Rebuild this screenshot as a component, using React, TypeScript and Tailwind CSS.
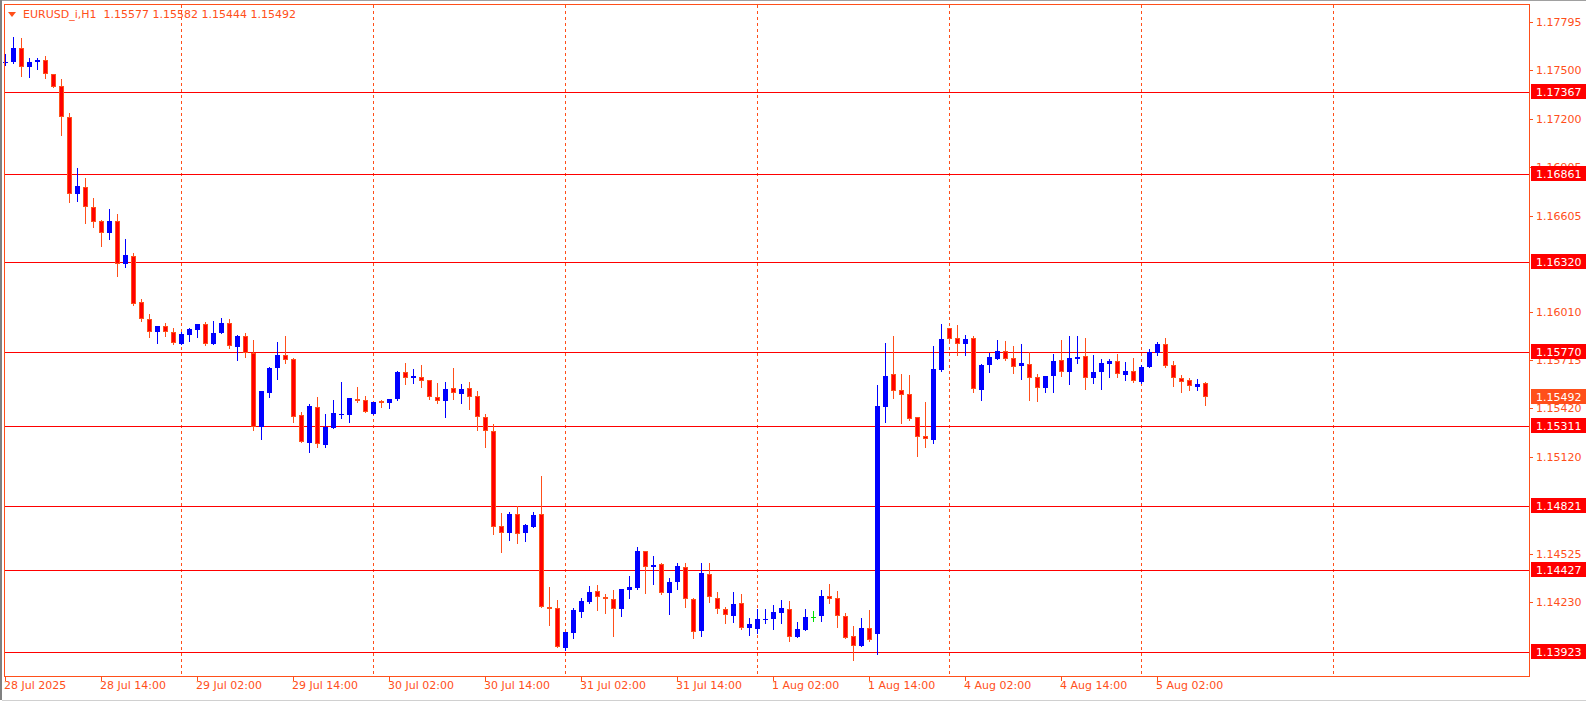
import React from "react";

const C: [number, number, number, number][] = [
[63,54,65,62],[62,37,63,48],[48,38,76,67],[67,58,77,62],[62,58,69,60],[60,56,78,74],[74,74,87,87],[86,79,135,117],
[117,113,202,194],[194,168,201,186],[187,178,223,207],[207,198,227,222],[221,220,246,233],[233,209,239,221],[221,214,276,264],[264,239,267,255],
[256,253,305,304],[302,299,321,319],[319,314,337,332],[332,326,343,326],[326,323,336,332],[332,328,344,343],[344,332,344,334],[335,328,341,329],
[330,324,337,324],[324,322,345,344],[344,321,344,333],[333,318,333,323],[323,319,348,346],[347,335,360,336],[336,333,357,353],[353,340,430,427],
[427,391,439,391],[393,367,397,368],[368,342,379,355],[355,336,363,360],[359,358,422,417],[415,412,442,442],[443,404,452,406],[407,397,447,444],
[445,414,447,427],[428,400,428,413],[415,382,418,414],[415,398,422,398],[399,387,402,401],[400,396,412,412],[414,402,414,402],[401,400,407,402],
[403,399,408,399],[399,371,400,372],[372,363,384,378],[378,369,383,376],[377,365,387,381],[380,380,399,397],[397,383,403,401],[401,382,417,389],
[388,368,399,393],[394,384,403,389],[388,382,409,397],[396,391,430,417],[417,414,447,431],[431,424,534,527],[526,513,552,533],[533,512,540,514],
[514,506,543,534],[533,524,541,525],[527,512,527,515],[514,476,607,607],[607,587,625,608],[608,600,647,647],[648,632,650,632],[633,608,638,610],
[612,598,617,601],[602,586,603,592],[591,585,610,597],[597,594,613,599],[599,590,636,609],[609,589,616,589],[590,576,598,587],[588,547,589,551],
[551,551,593,567],[567,556,584,565],[564,563,594,593],[593,578,614,582],[582,563,589,566],[567,563,607,599],[599,598,638,632],[631,563,636,573],
[574,563,602,597],[598,592,613,609],[609,607,623,615],[616,592,622,604],[603,594,629,628],[628,618,635,624],[629,609,633,619],[620,609,623,619],
[619,605,629,612],[613,600,623,608],[609,601,641,637],[637,622,637,629],[630,609,630,617],[617,611,622,617],[616,590,621,596],[596,584,603,599],
[598,591,627,616],[616,613,638,638],[636,626,660,646],[646,618,646,628],[628,610,641,640],[634,385,654,406],[407,343,422,376],[374,336,398,391],
[390,374,423,395],[394,375,420,419],[417,417,456,437],[436,402,447,439],[440,346,443,369],[370,324,371,339],[328,328,342,339],[338,325,355,344],
[344,335,355,339],[338,336,392,389],[390,364,400,365],[365,353,372,357],[359,340,359,351],[351,341,360,359],[358,346,373,367],[366,344,379,363],
[364,352,400,378],[377,374,401,388],[388,376,392,376],[376,354,392,361],[360,340,376,372],[372,336,384,358],[359,336,363,357],[356,338,389,378],
[378,355,383,372],[372,359,389,363],[364,359,377,361],[361,354,377,374],[375,362,380,371],[371,358,382,381],[382,365,383,367],[367,349,367,352],
[353,342,355,344],[344,338,367,366],[365,361,386,378],[378,375,392,382],[380,378,390,386],[387,379,390,384],[383,382,405,397],
];

const HL: [number, string][] = [
[92,"1.17367"],[174,"1.16861"],[262,"1.16320"],[352,"1.15770"],[426,"1.15311"],[506,"1.14821"],[570,"1.14427"],[652,"1.13923"],
];
const TICKS: [number, string][] = [
[22,"1.17795"],[70,"1.17500"],[119,"1.17200"],[167,"1.16905"],[216,"1.16605"],[312,"1.16010"],[360,"1.15715"],[408,"1.15420"],[457,"1.15120"],[554,"1.14525"],[602,"1.14230"],
];
const DATES = ["28 Jul 2025","28 Jul 14:00","29 Jul 02:00","29 Jul 14:00","30 Jul 02:00","30 Jul 14:00","31 Jul 02:00","31 Jul 14:00","1 Aug 02:00","1 Aug 14:00","4 Aug 02:00","4 Aug 14:00","5 Aug 02:00"];
const OR = "#ff4f1a";
const F = "'DejaVu Sans', sans-serif";

export default function App() {
  return (
    <div className="w-[1586px] h-[703px] bg-white relative overflow-hidden flex">
      <div className="w-[2px] h-[700px] bg-[#808080]" />
      <div className="flex-1 relative">
        <svg width="1584" height="703" className="absolute left-0 top-0" shapeRendering="crispEdges">
          <line x1="0" y1="0.5" x2="1584" y2="0.5" stroke="#a0a0a0" />
          <line x1="0" y1="700.5" x2="1584" y2="700.5" stroke="#d0d0d0" />
          {[181,373,565,757,949,1141,1333].map(x => (
            <line key={x} x1={x-1.5} y1="5" x2={x-1.5} y2="677" stroke={OR} strokeDasharray="3 3" />
          ))}
          {HL.map(([y]) => <line key={y} x1="3" y1={y+0.5} x2="1527" y2={y+0.5} stroke="#ff0000" />)}
          {C.map(([o,h,l,c], i) => {
            const x = 3 + 8 * i;
            const doji = o === c && i === 101;
            if (i === 101) return (
              <g key={i}>
                <line x1={x+0.5} y1={h} x2={x+0.5} y2={l} stroke="#00e000" />
                <line x1={x-2} y1={o+0.5} x2={x+3} y2={o+0.5} stroke="#00e000" />
              </g>
            );
            const bull = c < o;
            const top = Math.min(o,c), bot = Math.max(o,c);
            return (
              <g key={i}>
                <line x1={x+0.5} y1={h} x2={x+0.5} y2={l+1} stroke={bull ? "#0000ff" : OR} />
                {bull ? (
                  <rect x={x-2} y={top} width="5" height={Math.max(bot-top,1)} fill="#0000ff" />
                ) : (
                  <rect x={x-1.5} y={top+0.5} width="4" height={Math.max(bot-top-1,1)} fill="#ff0000" stroke={OR} />
                )}
                {doji ? null : null}
              </g>
            );
          })}
          <rect x="2.5" y="4.5" width="1525" height="672" fill="none" stroke={OR} />
          {TICKS.map(([y,t]) => (
            <g key={t}>
              <line x1="1527" y1={y+0.5} x2="1531" y2={y+0.5} stroke={OR} />
              <text x="1534" y={y+4} fontSize="11" fontFamily={F} fill={OR}>{t}</text>
            </g>
          ))}
          {HL.map(([y,t]) => (
            <g key={t}>
              <rect x="1529" y={y-8} width="57" height="15" fill="#ff0000" />
              <text x="1534" y={y+4} fontSize="11" fontFamily={F} fill="#ffffff">{t}</text>
            </g>
          ))}
          <rect x="1529" y="389" width="57" height="15" fill={OR} />
          <text x="1534" y="401" fontSize="11" fontFamily={F} fill="#ffffff">1.15492</text>
          {DATES.map((d,i) => (
            <g key={d}>
              <line x1={3.5+96*i} y1="677" x2={3.5+96*i} y2="681" stroke={OR} />
              <text x={2+96*i} y="689" fontSize="11" fontFamily={F} fill={OR}>{d}</text>
            </g>
          ))}
        </svg>
        <div className="absolute left-[6px] top-[9px] flex items-center gap-[7px] text-[11px] leading-none text-[#ff4f1a]" style={{fontFamily: F}}>
          <svg width="8" height="5"><polygon points="0,0 8,0 4,5" fill="#ff4f1a" /></svg>
          <span className="whitespace-pre">EURUSD_i,H1  1.15577 1.15582 1.15444 1.15492</span>
        </div>
      </div>
    </div>
  );
}
